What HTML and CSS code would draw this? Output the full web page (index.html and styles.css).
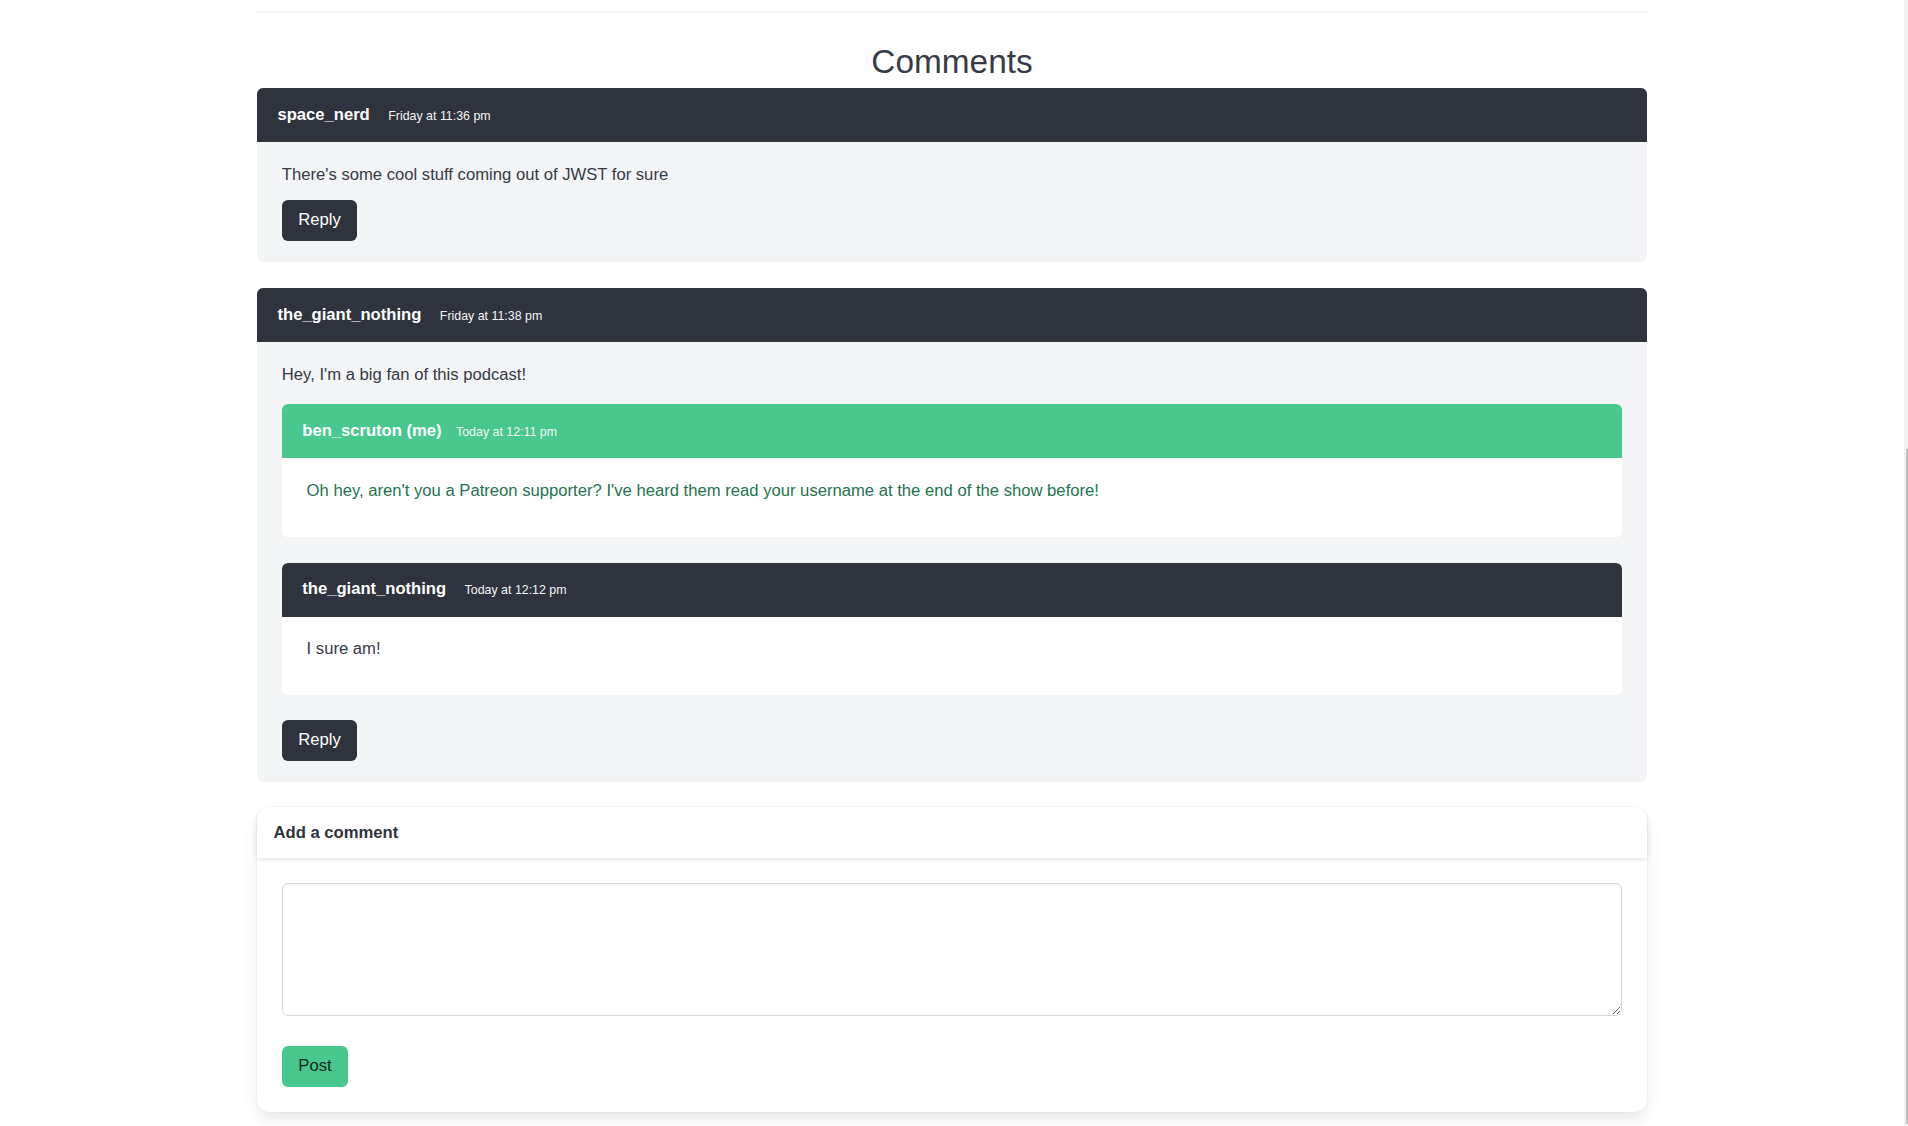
FILE: index.html
```html
<!DOCTYPE html>
<html lang="en">
<head>
<meta charset="utf-8">
<title>Comments</title>
<link rel="stylesheet" href="styles.css">
</head>
<body>
<div class="viewport">
  <main class="page">
    <div class="container">
      <hr class="divider">
      <h2 class="title">Comments</h2>

      <article class="message">
        <header class="message-header">
          <span class="author">space_nerd</span>
          <span class="date">Friday at 11:36 pm</span>
        </header>
        <div class="message-body">
          <p class="text">There's some cool stuff coming out of JWST for sure</p>
          <button class="button is-dark">Reply</button>
        </div>
      </article>

      <article class="message">
        <header class="message-header">
          <span class="author">the_giant_nothing</span>
          <span class="date">Friday at 11:38 pm</span>
        </header>
        <div class="message-body">
          <p class="text">Hey, I'm a big fan of this podcast!</p>
          <div class="replies">
            <article class="message nested">
              <header class="message-header is-success">
                <span class="author">ben_scruton (me)</span>
                <span class="date is-tight">Today at 12:11 pm</span>
              </header>
              <div class="message-body is-white">
                <p class="text text-success">Oh hey, aren't you a Patreon supporter? I've heard them read your username at the end of the show before!</p>
              </div>
            </article>
            <article class="message nested">
              <header class="message-header">
                <span class="author">the_giant_nothing</span>
                <span class="date">Today at 12:12 pm</span>
              </header>
              <div class="message-body is-white">
                <p class="text">I sure am!</p>
              </div>
            </article>
          </div>
          <button class="button is-dark">Reply</button>
        </div>
      </article>

      <div class="card">
        <header class="card-header">
          <p class="card-header-title">Add a comment</p>
        </header>
        <div class="card-content">
          <textarea class="textarea"></textarea>
          <button class="button is-success">Post</button>
        </div>
      </div>
    </div>
  </main>
  <div class="scrollbar"><div class="scrollbar-thumb"></div></div>
</div>
</body>
</html>
```

FILE: styles.css
```css
* { box-sizing: border-box; }

html, body {
  margin: 0;
  padding: 0;
  background: #ffffff;
}

body {
  font-family: "Liberation Sans", Arial, sans-serif;
  font-size: 16.65px;
  line-height: 1.5;
  color: #363a45;
}

.viewport {
  display: flex;
  height: 1126px;
  overflow: hidden;
}

.page {
  flex: 1;
  min-width: 0;
}

.container {
  width: 1390px;
  margin: 0 auto;
}

.divider {
  border: none;
  height: 2px;
  background: #f3f4f6;
  margin: 11px 0 0;
}

.title {
  margin: 30px 0 8px;
  font-size: 33.4px;
  line-height: 37.1px;
  font-weight: 400;
  text-align: center;
  color: #363b46;
}

.message {
  border-radius: 6px;
  background: #f3f4f6;
  margin-bottom: 26px;
}

.message-header {
  display: flex;
  align-items: baseline;
  height: 54px;
  padding: 16.7px 20.5px;
  line-height: 20.6px;
  background: #2e333d;
  color: #ffffff;
  border-radius: 6px 6px 0 0;
}

.message-header.is-success {
  background: #48c78e;
}

.author {
  font-weight: 700;
  font-size: 16.6px;
}

.date {
  font-size: 12.4px;
  line-height: 12.4px;
  margin-left: 18.5px;
  color: #f4f5f7;
}

.date.is-tight {
  margin-left: 14.5px;
}

.message-body {
  padding: 20.7px 24.8px;
  border-radius: 0 0 6px 6px;
}

.message-body.is-white {
  background: #ffffff;
}

.text {
  margin: 0 0 12.4px;
  line-height: 24.8px;
}

.text-success {
  color: #24734f;
}

.replies {
  padding-top: 4.1px;
}

.nested {
  background: #ffffff;
}

.nested:last-child {
  margin-bottom: 24.8px;
}

.button {
  display: inline-block;
  font-family: inherit;
  font-size: 16.65px;
  line-height: 24.8px;
  padding: 8.3px 16.5px;
  border: none;
  border-radius: 6px;
  cursor: pointer;
}

.button.is-dark {
  background: #2e333d;
  color: #ffffff;
}

.button.is-success {
  background: #48c78e;
  color: #10291d;
}

.card {
  background: #ffffff;
  border-radius: 12.4px;
  box-shadow: 0 8px 16.5px -2px rgba(9, 10, 12, 0.1), 0 0 0 1px rgba(9, 10, 12, 0.02);
  margin-top: -1px;
  margin-bottom: 16px;
}

.card-header {
  box-shadow: 0 2px 4px rgba(9, 10, 12, 0.1);
  border-radius: 12.4px 12.4px 0 0;
}

.card-header-title {
  margin: 0;
  padding: 13.5px 16.5px 13px;
  line-height: 24.8px;
  font-weight: 700;
  color: #2e333d;
}

.card-content {
  padding: 24.8px;
}

.textarea {
  display: block;
  width: 100%;
  height: 133px;
  margin: 0 0 29.5px;
  padding: 11px;
  font-family: inherit;
  font-size: 16.65px;
  border: 1px solid #d6dae0;
  border-radius: 6px;
  box-shadow: inset 0 1px 2px rgba(9, 10, 12, 0.05);
  resize: vertical;
  background: #ffffff;
}

.scrollbar {
  width: 4px;
  flex: none;
  background: #f0f0f0;
  padding-top: 449px;
  display: flex;
  justify-content: flex-end;
}

.scrollbar-thumb {
  width: 2.5px;
  height: 675px;
  background: #c1c1c1;
}
```
